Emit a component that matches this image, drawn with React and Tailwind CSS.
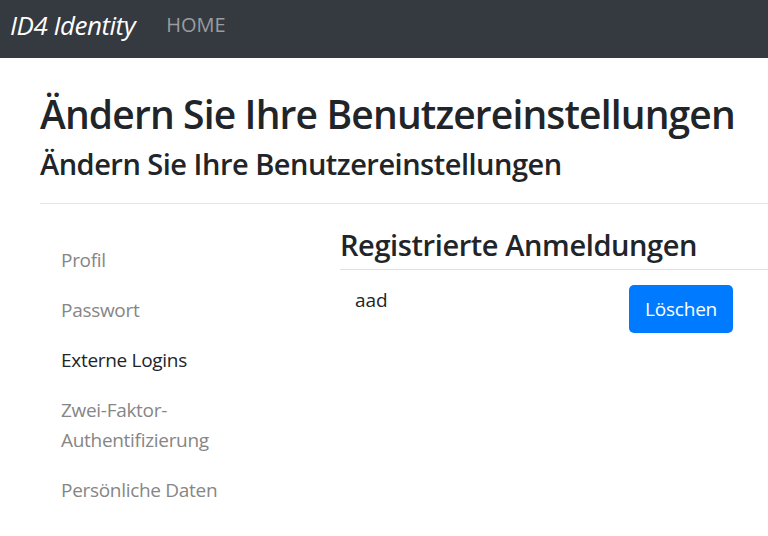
const navItems = [
  { label: "Profil" },
  { label: "Passwort" },
  { label: "Externe Logins", active: true },
  { label: "Zwei-Faktor-", label2: "Authentifizierung" },
  { label: "Persönliche Daten" },
];

export default function App() {
  return (
    <div
      className="w-[768px] h-[536px] overflow-hidden bg-white text-[#212529]"
      style={{ fontFamily: '"Open Sans", "Noto Sans", sans-serif' }}
    >
      {/* Navbar */}
      <header className="h-[58px] bg-[#343a40] flex items-start pt-[7px] pl-[10px]">
        <span className="text-white italic text-[26px] leading-[36px] tracking-[-0.5px]">ID4 Identity</span>
        <a className="ml-[31px] text-[#9a9da0] text-[20px] leading-[36px]">HOME</a>
      </header>

      <main className="pl-[40px]">
        <h1 className="mt-[32px] text-[39px] leading-[48px] tracking-[-0.85px] font-semibold whitespace-nowrap">
          Ändern Sie Ihre Benutzereinstellungen
        </h1>
        <h2 className="mt-[6px] text-[29px] leading-[40px] tracking-[-0.5px] font-semibold whitespace-nowrap">
          Ändern Sie Ihre Benutzereinstellungen
        </h2>
        <hr className="mt-[19px] border-t border-[#e5e5e5]" />

        <div className="flex mt-[31px]">
          {/* Sidebar */}
          <nav className="w-[285px] shrink-0 flex flex-col">
            {navItems.map((item) => (
              <a
                key={item.label}
                className={`block px-[21px] py-[10px] text-[19px] leading-[30px] tracking-[-0.3px] whitespace-nowrap ${
                  item.active ? "text-[#212529]" : "text-[#868686]"
                }`}
              >
                {item.label}
                {item.label2 && (
                  <>
                    <br />
                    {item.label2}
                  </>
                )}
              </a>
            ))}
          </nav>

          {/* Content */}
          <section className="flex-1 pl-[15px]">
            <h3 className="-mt-[10px] text-[29px] leading-[40px] tracking-[-0.4px] font-semibold whitespace-nowrap">
              Registrierte Anmeldungen
            </h3>
            <table className="mt-[4px] w-full border-t border-[#dee2e6]">
              <tbody>
                <tr>
                  <td className="w-[274px] px-[15px] py-[15px] align-top text-[19px] leading-[30px]">aad</td>
                  <td className="px-[15px] py-[15px] align-top">
                    <button className="bg-[#007bff] text-white text-[19px] leading-[30px] px-[16px] py-[9px] rounded-[5px] tracking-[-0.2px]">
                      Löschen
                    </button>
                  </td>
                </tr>
              </tbody>
            </table>
          </section>
        </div>
      </main>
    </div>
  );
}
